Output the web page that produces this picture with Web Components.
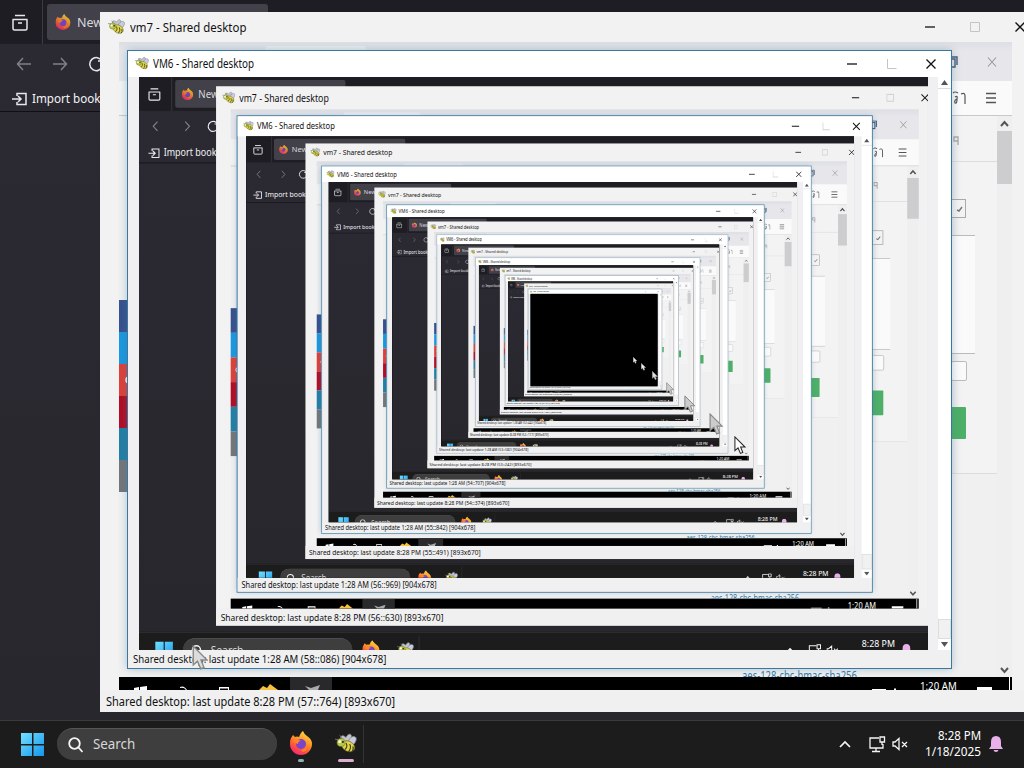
<!DOCTYPE html>
<html lang="en">
<head>
<meta charset="utf-8">
<title>Shared desktop</title>
<style>
html,body{margin:0;width:1024px;height:768px;overflow:hidden;background:#2b2a33}
body{font-family:"Noto Sans","Open Sans",sans-serif}
</style>
</head>
<body>
<desk-screen level="0"></desk-screen>
<script>
const SCALE = 0.7705;
const MAX = 8;
const define = (name, markup, setup) => customElements.define(name, class extends HTMLElement {
  connectedCallback() {
    if (this.shadowRoot) return;
    const root = this.attachShadow({mode: 'open'});
    root.innerHTML = typeof markup === 'function' ? markup(this) : markup;
    if (setup) setup(this, root);
  }
});

/* One line of text, stretched or squeezed to the width given in "w". */
define('fit-text', `<style>:host{display:inline-block;white-space:pre;line-height:1.3}span{display:inline-block;transform-origin:0 50%}</style><span><slot></slot></span>`,
  (host, root) => {
    const span = root.querySelector('span'), w = +host.getAttribute('w');
    host.style.width = w + 'px';
    span.style.transform = `scaleX(${w / span.offsetWidth})`;
  });

define('bee-icon', `<style>:host{display:block;width:16px;height:16px}svg{display:block;width:100%;height:100%}</style>
<svg viewBox="0 0 20 20"><path d="M8 9C3 5 6 1 10 5C12 0 18 1 13 9Z" fill="#c0c4cc" stroke="#81868c" stroke-width=".7"/><path d="M12 9c2-7 9-6 7-1s-4 4-7 2z" fill="#c8cbdf" stroke="#7d8291" stroke-width=".7"/>
<ellipse cx="12" cy="13" rx="6.3" ry="4.6" transform="rotate(28 12 13)" fill="#e2d548" stroke="#5c5a20" stroke-width=".5"/><path d="M10 10q2 3-1 6M13.300 11q2 3-1 7M16.300 13q1 3-1 5" stroke="#3c3b1c" stroke-width="1" fill="none"/>
<circle cx="5.500" cy="9.500" r="3.700" fill="#b9c945" stroke="#666c2a" stroke-width=".5"/><circle cx="4.300" cy="8.800" r="1.300" fill="#fff"/><circle cx="7.200" cy="9" r="1" fill="#3a3a20"/><path d="M3.500 7L0 6.500M6 6L4.500 3" stroke="#777" stroke-width=".8"/></svg>`);

define('fox-icon', `<style>:host{display:block;width:24px;height:24px}svg{display:block;width:100%;height:100%}</style>
<svg viewBox="0 0 24 24"><defs><linearGradient id="g" x1=".8" y1="0" x2=".3" y2="1"><stop offset="0" stop-color="#ffe14a"/><stop offset=".4" stop-color="#ff9a23"/><stop offset=".75" stop-color="#ff4d42"/><stop offset="1" stop-color="#f0267a"/></linearGradient></defs>
<path d="M2 7L4 4L6 6Q8 5 10 6Q12 1 14 0Q15 3 18 5Q23 8 23 13A11 11 0 0 1 1 13Q1 9 2 7Z" fill="url(#g)"/><circle cx="12" cy="13" r="5" fill="#7a45c8"/><path d="M4 10Q8 7 12 10Q9 10 9 13Q7 13 4 10ZM12 19a6 6 0 0 0 6-6q2 6-4 8z" fill="#ff8528"/></svg>`);

define('pointer-icon', `<style>:host{display:block;width:13px;height:21px}svg{display:block;width:100%;height:100%}</style>
<svg viewBox="0 0 13 21"><path d="M1 1V16L4.400 13L7 19L9.600 18L7.200 12H12Z" fill="var(--fill,#fff)" stroke="var(--line,#111)" stroke-width="1.1"/></svg>`);

/* Window frame: title bar, body slot, status line. */
define('viewer-window', host => `<style>
:host{display:grid;box-sizing:border-box;position:absolute;color:#111}
:host([kind=back]){left:100px;top:12px;width:936px;height:700px;grid-template-rows:30px 648px 22px;background:#f2f2f3}
:host([kind=front]){left:9px;top:9px;width:823px;height:617px;grid-template-rows:26px 573px 18px;background:#f0f0f2;box-shadow:0 0 0 var(--bw) var(--edge),0 0 8px 1px rgba(70,120,150,.38);}
header{display:flex;align-items:center;box-sizing:border-box}
:host([kind=back]) header{padding-left:8px;gap:5px;font-size:13px}
:host([kind=front]) header{padding-left:7px;gap:4px;font-size:12.5px;background:#fff}
bee-icon{flex:none;width:17px;height:17px;margin-top:-2px}
:host([kind=front]) bee-icon{width:14px;height:14px}
.btn{margin-left:auto;display:flex;align-items:center}
svg{display:block;fill:none;stroke:#111;stroke-width:1.3}
:host([kind=back]) .btn{gap:35px;margin-right:11px}
:host([kind=front]) .btn{gap:29.5px;margin-right:15px}
main{display:flex;min-width:0;min-height:0;position:relative}
:host([kind=back]) main{padding-left:19px}
:host([kind=front]) main{padding-left:11px}
footer{display:flex;align-items:center;padding-left:6px;background:#f0f0f1;font-size:12px;box-sizing:border-box;padding-top:1px}
:host([kind=front]) footer{font-size:11.5px;padding-left:5px}
</style>
<header><bee-icon></bee-icon><fit-text w="${host.getAttribute('tw')}">${host.getAttribute('heading')}</fit-text>
<div class="btn"><svg width="10" height="12"><path d="M0 6H10"/></svg>
<svg width="10" height="12" style="stroke:#c4c4c4;stroke-width:1">${host.getAttribute('kind') === 'back' ? '<path d="M.5 1.500H9.500V10.500H.5Z"/>' : '<path d="M.5 1V10.500H9.500"/>'}</svg>
<svg width="10" height="12"><path d="M.5 1.500L9.500 10.500M9.500 1.500L.5 10.500"/></svg></div></header>
<main><slot></slot></main>
<footer><fit-text w="${host.getAttribute('sw')}">${host.getAttribute('status')}</fit-text></footer>`);

/* Page shown behind the front window. */
define('remote-page', `<style>
:host{display:grid;grid-template-rows:39px 34px 1px 561px 13px;width:893px;height:648px;position:relative;background:#f0f0f1;flex:none}
.tabs{background:linear-gradient(#dddfe4,#e6e6eb 9px);display:flex;align-items:center;justify-content:flex-end;box-sizing:border-box;padding-right:15px;gap:28px}
.tools{background:linear-gradient(90deg,#f3f3f3 12px,#fafafa 12px);display:flex;align-items:center;justify-content:flex-end;padding-right:15px;gap:19px}
.rule{background:#c8c8ca}
.page{display:flex;justify-content:space-between;min-height:0}
.social{width:12px;padding-top:184px}.social i{display:block;height:32px;position:relative}
.right{display:grid;grid-template-columns:46px 15px;}
.col{display:flex;flex-direction:column;align-items:flex-start;background:linear-gradient(90deg,#e9e9ec,#f3f3f3 10px)}
.col>*{box-sizing:border-box;flex:none}
.bar{background:#efefef;display:flex;flex-direction:column;align-items:center;box-sizing:border-box;padding:4px 0 3px}
.bar b{width:15px;height:53px;background:#cdcdcf;margin-top:4px;margin-bottom:auto}
svg{display:block;fill:none;stroke:#555;stroke-width:1.4;flex:none}
.task{background:#000;display:flex;overflow:hidden;position:relative;color:#fff;font-size:11.5px}
.task svg{fill:#fff;stroke:none}
.tab{position:absolute;left:146px;top:4px;width:101px;height:5px;background:#ecedf0;border-radius:4px 4px 0 0}
.link{position:absolute;left:623px;top:625px;height:10px;overflow:hidden;color:#347ba8;font-size:12px;text-decoration:underline}
</style>
<div class="tabs"><svg width="11" height="12" style="stroke:#455b78"><path d="M3 1H9V9M1 3H7V11H1Z"/></svg><svg width="10" height="12" style="stroke:#999;stroke-width:1.100"><path d="M1 1.500L9 10.500M9 1.500L1 10.500"/></svg></div>
<div class="tools"><svg width="14" height="16" style="stroke-width:1.200"><path d="M1 3Q3 1 6 3M3 7Q6 5 5 9Q2 10 3 13Q5 14 5 9M9 4Q13 2 13 6V14"/></svg><svg width="12" height="12"><path d="M1 1.500H11M1 6H11M1 10.500H11"/></svg></div>
<div class="rule"></div>
<div class="page"><div class="social"><i style="background:#38508e"></i><i style="background:#1b98e0"></i><i style="background:#df4039"><svg width="8" height="10" style="position:absolute;left:5px;top:11px;stroke:#fff"><circle cx="5" cy="5" r="3"/></svg></i><i style="background:#b30c25"></i><i style="background:#237fa5"></i><i style="background:#74777a"></i></div>
<div class="right"><div class="col">
<svg width="7" height="10" style="margin:20px 0 0 2px;stroke:#aaa"><path d="M5 9V1H1V5H5"/></svg>
<div style="width:46px;height:1px;background:#dcdcdc;margin-top:15px"></div>
<div style="width:15px;height:19px;border:1px solid #aaa;margin-top:37px;background:#f3f3f3"><svg width="13" height="16" style="stroke:#777"><path d="M5 10L7 11L10 7"/></svg></div>
<div style="width:24px;height:119px;margin-top:17px;border:solid #bbb;border-width:1px 0;background:#fafafa"></div>
<div style="width:16px;height:20px;border:1px solid #bbb;border-radius:2px;margin-top:7px;background:#fafafa"></div>
<div style="width:15px;height:32px;background:#4daf68;margin-top:26px;border-radius:0 1px 1px 0"></div>
<div style="width:46px;height:1px;background:#dcdcdc;margin-top:34px"></div>
<div style="width:46px;flex:1;background:#f0f0f1"></div></div>
<div class="bar"><svg width="9" height="7" style="stroke-width:2"><path d="M1 6L4.500 2L8 6"/></svg><b></b><svg width="9" height="7" style="stroke-width:2"><path d="M1 1L4.500 5L8 1"/></svg></div></div></div>
<div class="task"><svg width="893" height="13" style="position:absolute"><path d="M171 0H213V13H171Z" fill="#29292b"/><path d="M15 11L20 10V13H15ZM21 10L28 9V13H21ZM100 10H110V13H109V11.500H101V13H100ZM753 12H767V13H753ZM775 11.500H777V13H775ZM858 10H873V13H858ZM890 0H891V13H890Z"/><path d="M61 10q4-2 7 3h-1q-2-3-6-2z"/><path d="M140 13L144 9L148 11L151 7L159 13Z" fill="#f6c13b"/><path d="M186 9L192 11L201 8L199 13H190Z" fill="#aaa"/></svg><fit-text w="37" style="margin:2px 0 0 801px">1:20 AM</fit-text></div>
<div class="tab"></div><div class="link"><fit-text w="115">aes-128-cbc-hmac-sha256</fit-text></div><slot></slot>`);

define('scroll-rail', `<style>:host{display:flex;flex-direction:column;align-items:center;justify-content:space-between;width:13px;margin-left:10px;background:#fff;height:573px;box-sizing:border-box;padding:3px 0 3px}
svg{display:block}b{box-sizing:border-box;width:13px;height:20px;border:1px solid #ddd;background:#f1f1f2;margin-top:auto;margin-bottom:3px}.up{width:13px;border-bottom:1px solid #ddd;padding-bottom:3px}</style>
<div class="up"><svg width="13" height="5"><path d="M3 5L6.500 0L10 5Z" fill="#555"/></svg></div><b></b><svg width="13" height="5"><path d="M3 0H10L6.500 5Z" fill="#555"/></svg>`);

define('browser-shell', host => `<style>
:host{display:grid;grid-template-rows:44px 68px 1fr;height:720px;background:linear-gradient(#2b2a33,#28272d);color:#f4f4f6;font-size:13px}
.tabs{background:#1e1d23;display:flex}.menu{width:43px;display:grid;place-items:center;border-right:1px solid #3b3b42;box-sizing:border-box;padding:1px 3px 0 0}
.tab{margin:4px 0 4px 4px;width:221px;background:#42414a;border-radius:3px;display:flex;align-items:center;gap:6px;padding-left:8px;box-sizing:border-box}
fox-icon{width:16px;height:16px;opacity:.85}
.nav{display:grid;grid-template-rows:41px 27px;border-bottom:1px solid #101014;box-sizing:border-box}
.row{display:flex;align-items:center}
svg{display:block;fill:none;stroke:#e8e8ec;stroke-width:1.5;flex:none}
</style>
<div class="tabs"><div class="menu"><svg width="18" height="18"><path d="M4 1.500H14M1.500 5.500H16.500M2 5.500V14.500Q2 16 3.500 16H14.500Q16 16 16 14.500V5.500M7 9H11"/></svg></div><div class="tab"><fox-icon></fox-icon><fit-text w="50" style="color:#d7d7dc">New Tab</fit-text></div></div>
<div class="nav"><div class="row" style="padding:0 0 1px 16px;gap:20px">${host.hasAttribute('nested')
  ? '<svg width="16" height="14" style="stroke:#818087"><path d="M8 1L2.500 7L8 13"/></svg><svg width="16" height="14" style="stroke:#818087"><path d="M8 1L13.500 7L8 13"/></svg>'
  : '<svg width="16" height="14" style="stroke:#818087"><path d="M15 7H2M7 1L1.500 7L7 13"/></svg><svg width="16" height="14" style="stroke:#818087"><path d="M1 7H14M9 1L14.500 7L9 13"/></svg>'}<svg width="16" height="16"><path d="M14 5A6.500 6.500 0 1 0 14.500 10M14 1V5H10"/></svg></div>
<div class="row" style="padding-left:12px;gap:5px"><svg width="15" height="14"><path d="M0 7H9M6 4L9 7L6 10M5 4V1.500H14V12.500H5V10"/></svg><fit-text w="112">Import bookmarks...</fit-text></div></div>`);

define('task-bar', `<style>
:host{display:flex;align-items:center;height:48px;box-sizing:border-box;border-top:1px solid #3a3a3c;background:#1c1c1c;color:#fff;padding:0 0 1px 21px}
svg{display:block;flex:none;fill:none;stroke:#f5f5f5;stroke-width:1.3}
.search{margin-left:12px;width:220px;height:32px;border-radius:16px;background:#3e3e3e;border-top:1px solid #555;box-sizing:border-box;display:flex;align-items:center;gap:10px;padding-left:11px;font-size:14px;color:#d8d8d8}
.app{display:grid;justify-items:center;grid-template-rows:26px 3px;row-gap:3px;align-items:center;padding-top:4px}
.app i{height:3px;border-radius:2px}
.sep{width:1px;height:38px;background:#343434;margin-left:6px}
.tray{margin-left:auto;display:flex;align-items:center;padding-right:21px}
.clock{display:flex;flex-direction:column;align-items:flex-end;font-size:12px;width:60px;margin-left:12px}
</style>
<svg width="24" height="24" style="stroke:none"><defs><linearGradient id="w" x1="0" y1="0" x2="1" y2="1"><stop offset="0" stop-color="#72e0ff"/><stop offset="1" stop-color="#1495ec"/></linearGradient></defs><path fill="url(#w)" d="M0 1H11V12H0ZM12.500 1H23V12H12.500ZM0 13.500H11V24H0ZM12.500 13.500H23V24H12.500Z"/></svg>
<div class="search"><svg width="15" height="16" style="stroke-width:1.800"><circle cx="6.500" cy="6.500" r="5.300"/><path d="M10.500 10.500L14.500 15"/></svg><fit-text w="42">Search</fit-text></div>
<div class="app" style="margin-left:12px;width:24px"><fox-icon></fox-icon><i style="width:6px;background:#8fb3b3"></i></div>
<div class="app" style="margin-left:22px;width:22px"><bee-icon style="width:22px;height:22px"></bee-icon><i style="width:16px;background:#dbaed2"></i></div><div class="sep"></div>
<div class="tray"><svg width="12" height="8" style="stroke-width:1.700"><path d="M1 7L6 2L11 7"/></svg>
<svg width="18" height="17" style="margin-left:17px"><path d="M11 2H2V12H15V8M8 12V15M4 15.500H12M12 1H16.500V6H12ZM14 6V9"/></svg>
<svg width="17" height="14" style="margin-left:6px"><path d="M1 5H3L7 1.500V12.500L3 9H1ZM10 5L15 10M15 5L10 10"/></svg>
<div class="clock"><fit-text w="43">8:28 PM</fit-text><fit-text w="56">1/18/2025</fit-text></div>
<svg width="14" height="16" style="margin-left:8px;fill:#e9b0ea;stroke:none"><path d="M7 0Q12 0 12 6V10L14 13H0L2 10V6Q2 0 7 0ZM4.500 14H9.500Q9 16 7 16T4.500 14Z"/></svg></div>`);

/* A whole desktop; each one shows the next inside its front window. */
const backTimes = ['57::764','56::630','55::491','54::374','53::242','52::117','51::004','50::864'];
const frontTimes = ['58::086','56::969','55::842','54::707','53::582','52::442','51::317','50::204'];
define('desk-screen', host => {
  const n = +host.getAttribute('level');
  const k = 1 / Math.pow(SCALE, n);
  const edge = n < 2 ? '#3b789f' : n < 4 ? '#6b9cb8' : '#b6c5ce';
  const css = `<style>:host{display:block;position:relative;overflow:hidden;width:1024px;height:768px;flex:none;background:#000}
.view{width:789px;height:573px;overflow:hidden;flex:none;background:#000}
.view>desk-screen{transform:scale(${SCALE});transform-origin:0 0}
pointer-icon{position:absolute}</style>`;
  if (n >= MAX) return css;
  return `${css}<browser-shell ${n ? 'nested' : ''}></browser-shell><task-bar></task-bar>
<viewer-window kind="back" heading="vm7 - Shared desktop" tw="116" sw="289" status="Shared desktop: last update 8:28 PM (${backTimes[n]}) [893x670]">
<remote-page><viewer-window kind="front" style="--edge:${edge};--bw:${k}px" heading="VM6 - Shared desktop" tw="101" sw="253" status="Shared desktop: last update 1:28 AM (${frontTimes[n]}) [904x678]">
<div class="view"><desk-screen level="${n + 1}"></desk-screen></div><scroll-rail></scroll-rail></viewer-window></remote-page></viewer-window>
${n === 0 ? [[192,645,1.25,'#dcdcdc','#888'],[734,436,.92,'#fff','#222'],[709,413,1.1,'#ccc','#888'],[684,395,.9,'#ccc','#888'],[666,382,.65,'#ccc','#888'],[652,371,.45,'#ddd','#bbb'],[641,363,.38,'#eee','#ccc'],[633,357,.33,'#eee','#ccc']]
  .map(p => `<pointer-icon style="left:${p[0]}px;top:${p[1]}px;width:${13*p[2]}px;height:${21*p[2]}px;--fill:${p[3]};--line:${p[4]}"></pointer-icon>`).join('') : ''}`;
});
</script>
</body>
</html>
